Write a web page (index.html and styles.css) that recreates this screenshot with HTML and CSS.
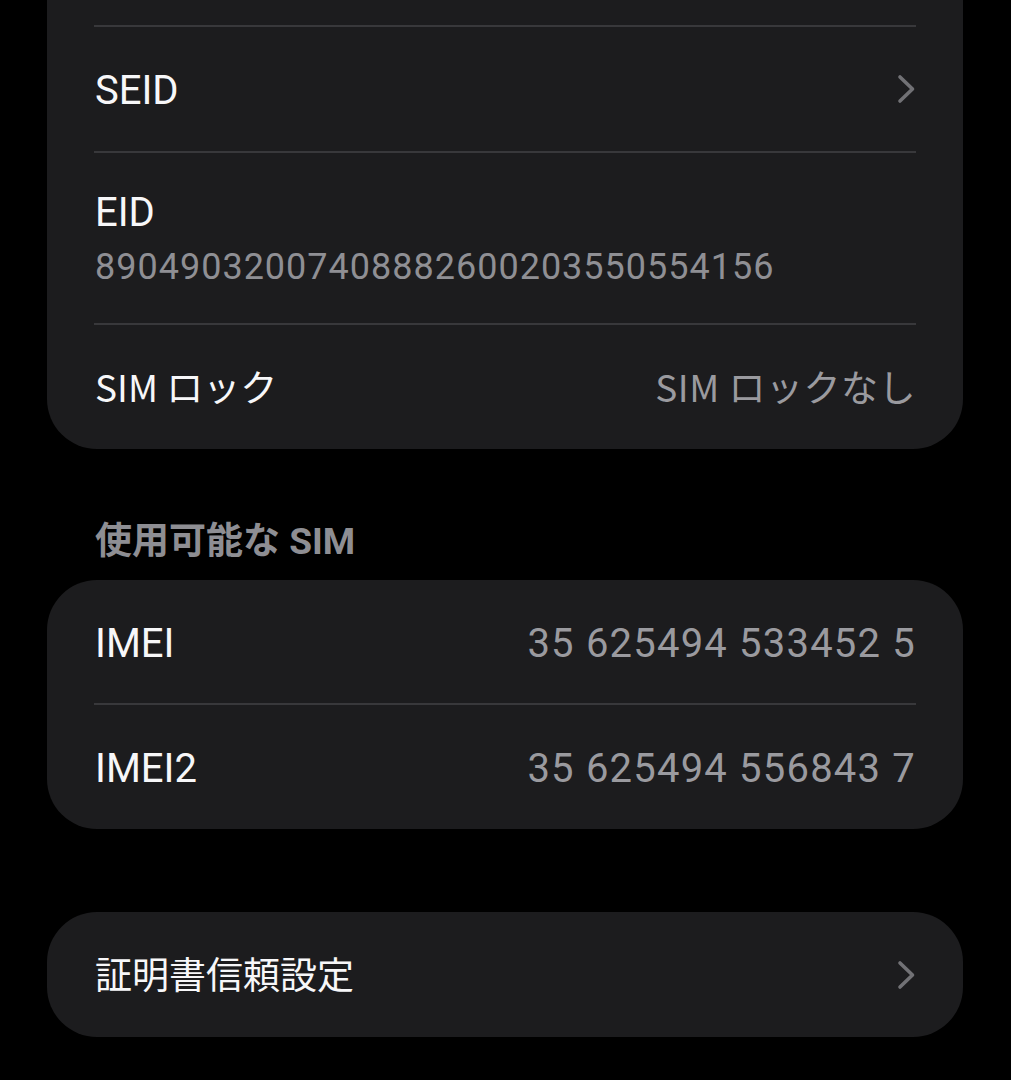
FILE: index.html
```html
<!DOCTYPE html>
<html lang="ja">
<head>
<meta charset="utf-8">
<title>SIM</title>
<link rel="stylesheet" href="styles.css">
</head>
<body>
<main class="page">
  <section class="card card-cont">
    <div class="row">
      <span class="label">SEID</span>
      <svg class="chev" viewBox="0 0 20 30" width="20" height="30"><path d="M4 3 L16.5 15 L4 27" /></svg>
    </div>
    <div class="row row-stack">
      <span class="label">EID</span>
      <span class="sub">89049032007408882600203550554156</span>
    </div>
    <div class="row">
      <span class="label ja">SIM ロック</span>
      <span class="value ja">SIM ロックなし</span>
    </div>
  </section>

  <h2 class="section-title">使用可能な SIM</h2>

  <section class="card">
    <div class="row row-first">
      <span class="label">IMEI</span>
      <span class="value">35 625494 533452 5</span>
    </div>
    <div class="row">
      <span class="label">IMEI2</span>
      <span class="value">35 625494 556843 7</span>
    </div>
  </section>

  <section class="card card-single">
    <div class="row row-first">
      <span class="label ja">証明書信頼設定</span>
      <svg class="chev" viewBox="0 0 20 30" width="20" height="30"><path d="M4 3 L16.5 15 L4 27" /></svg>
    </div>
  </section>
</main>
</body>
</html>
```

FILE: styles.css
```css
html, body {
  margin: 0;
  padding: 0;
  background: #000;
}
body {
  font-family: Roboto, "Noto Sans CJK JP", sans-serif;
  color: #f7f7f9;
  -webkit-font-smoothing: antialiased;
}
.page {
  display: flex;
  flex-direction: column;
  padding: 0 48px 0 47px;
}
.card {
  background: #1c1c1e;
  border-radius: 50px;
  padding: 0 47px 0 47px;
  display: flex;
  flex-direction: column;
}
.card-cont {
  border-top-left-radius: 0;
  border-top-right-radius: 0;
  padding-top: 25px;
}
.row {
  box-sizing: border-box;
  display: flex;
  align-items: center;
  justify-content: space-between;
  min-height: 126px;
  border-top: 2px solid #38383b;
  padding-left: 1px;
}
.row-first {
  border-top: none;
  min-height: 123px;
}
.card-single .row-first {
  min-height: 125px;
}
.row-stack {
  flex-direction: column;
  align-items: flex-start;
  justify-content: flex-start;
  padding-top: 36px;
  padding-bottom: 26px;
  min-height: 0;
}
.label {
  font-size: 40px;
  line-height: 48px;
  padding-top: 4px;
  color: #f7f7f9;
}
.row-stack .label {
  padding-top: 0;
}
.sub {
  font-size: 36px;
  line-height: 60px;
  letter-spacing: 1px;
  color: #8f8f94;
}
.value {
  font-size: 40px;
  line-height: 48px;
  padding-top: 4px;
  letter-spacing: 1.2px;
  color: #9a9a9f;
}
.ja {
  font-family: "Noto Sans CJK JP", Roboto, sans-serif;
  font-size: 37px;
  padding-top: 0;
  padding-bottom: 3px;
}
.value.ja {
  letter-spacing: 0.5px;
}
.chev {
  display: block;
}
.chev path {
  fill: none;
  stroke: #717175;
  stroke-width: 3.6;
  stroke-linecap: round;
  stroke-linejoin: round;
}
.section-title {
  margin: 68px 0 13px 48px;
  font-family: Roboto, "Noto Sans CJK JP", sans-serif;
  font-size: 37px;
  line-height: 50px;
  font-weight: 700;
  color: #8e8e93;
}
.card-single {
  margin-top: 83px;
}
```
